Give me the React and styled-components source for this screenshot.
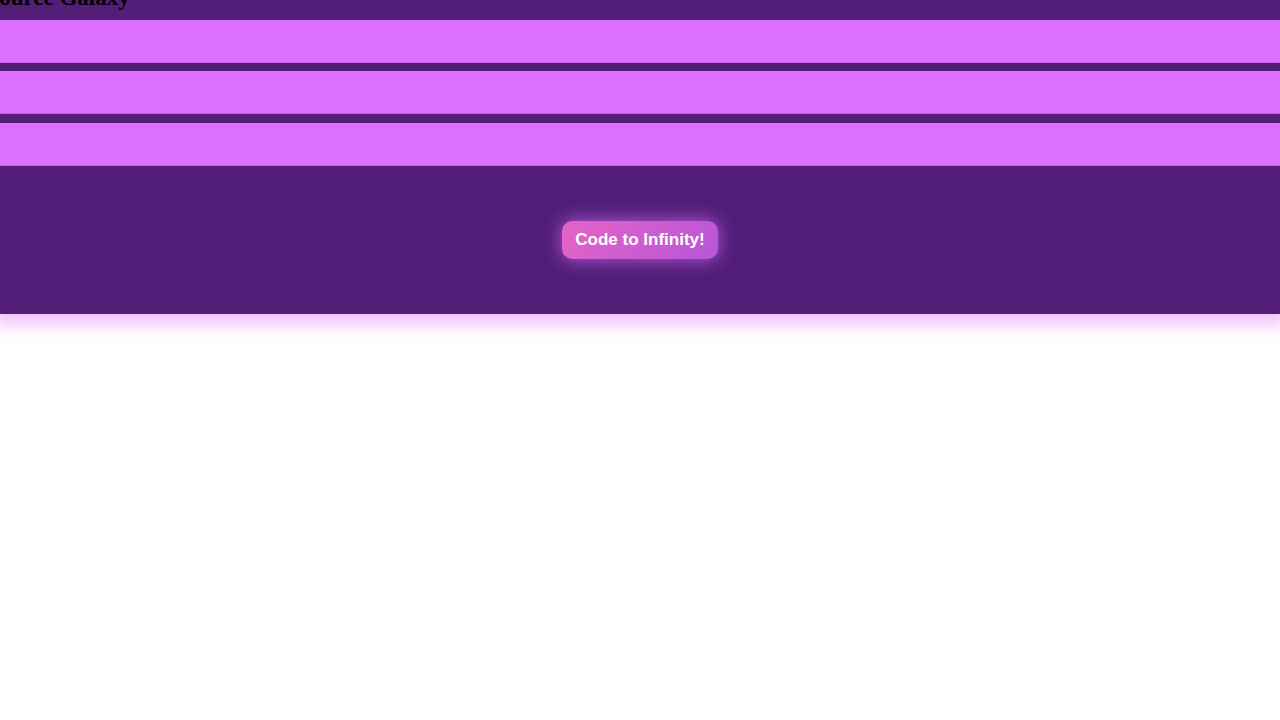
import styled, { createGlobalStyle } from 'styled-components';

const GlobalStyle = createGlobalStyle`
    html, body {
        margin: 0;
        padding: 0;
        background: #ffffff;
    }
`

const Header = styled.header`
    position: relative;
    background-color: #521e78;
    display: flex;
    flex-direction: column;
    gap: 8.5px;
    box-shadow: 0 2px 16px 8px rgba(221, 111, 255, 0.45);
`

const Title = styled.h2`
    margin: -15px 0 0 -73px;
    font-family: "Liberation Serif", "Times New Roman", serif;
    font-size: 23px;
    font-weight: 700;
    color: #000;
    line-height: normal;
    white-space: nowrap;
`

const Band = styled.div`
    height: 42px;
    background-color: #dd6fff;
    border-bottom: 1px solid #c85fe8;
`

const Stage = styled.div`
    display: flex;
    justify-content: center;
    align-items: center;
    padding: 55px 0 55px;
    margin-top: -8.5px;
`

const Button = styled.button`
    border: none;
    border-radius: 10px;
    padding: 9px 13px;
    background: linear-gradient(135deg, #e664c6 0%, #b656d8 100%);
    color: #fff;
    font-family: "Liberation Sans", Arial, sans-serif;
    font-size: 17px;
    font-weight: 700;
    line-height: 20px;
    cursor: pointer;
    box-shadow: 0 0 18px rgba(221, 111, 255, 0.75);
`

const Page = styled.div`
    overflow: hidden;
    min-height: 100vh;
`

const App = () => {
    return (
        <Page>
            <GlobalStyle />
            <Header>
                <Title>Open Source Galaxy</Title>
                <Band />
                <Band />
                <Band />
                <Stage>
                    <Button>Code to Infinity!</Button>
                </Stage>
            </Header>
        </Page>
    )
}

export default App
